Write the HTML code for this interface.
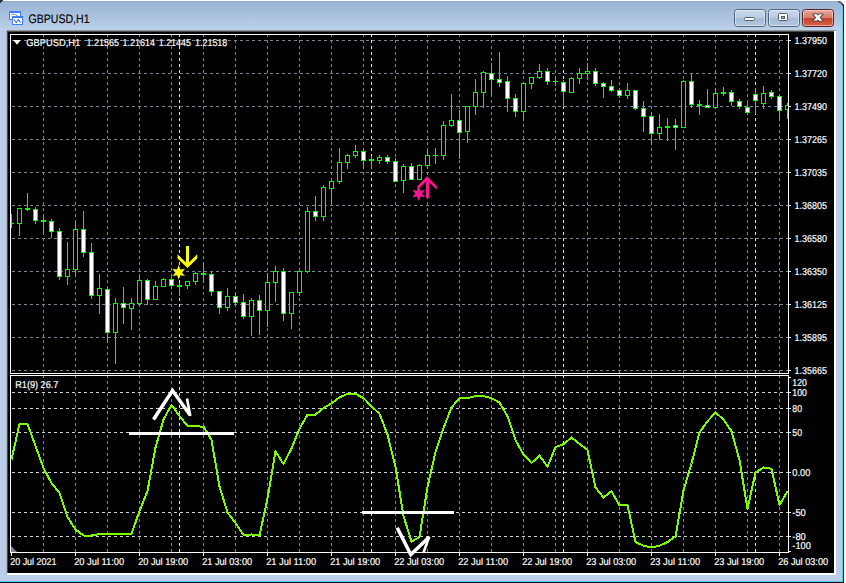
<!DOCTYPE html>
<html lang="en">
<head>
<meta charset="utf-8">
<title>GBPUSD,H1</title>
<style>
html,body{margin:0;padding:0;background:#ffffff;}
body{width:846px;height:583px;overflow:hidden;font-family:'Liberation Sans', Arial, sans-serif;}
svg text{white-space:pre;text-rendering:geometricPrecision;}
</style>
</head>
<body>
<svg width="846" height="583" viewBox="0 0 846 583" style="display:block">
<defs>
<linearGradient id="tb" x1="0" y1="0" x2="0" y2="1"><stop offset="0" stop-color="#98b3d3"/><stop offset="1" stop-color="#bcd1ea"/></linearGradient>
<linearGradient id="bt" x1="0" y1="0" x2="0" y2="1"><stop offset="0" stop-color="#c9d9ec"/><stop offset="0.48" stop-color="#bacce3"/><stop offset="0.5" stop-color="#a4bad6"/><stop offset="1" stop-color="#b4c8e0"/></linearGradient>
<linearGradient id="bc" x1="0" y1="0" x2="0" y2="1"><stop offset="0" stop-color="#e9a99b"/><stop offset="0.48" stop-color="#d8806d"/><stop offset="0.5" stop-color="#c4402a"/><stop offset="1" stop-color="#d4654a"/></linearGradient>
<clipPath id="cm"><rect x="11" y="35" width="777" height="338"/></clipPath>
<clipPath id="cs"><rect x="11" y="376" width="777" height="176"/></clipPath>
</defs>
<rect x="0" y="0" width="846" height="583" fill="#ffffff"/>
<rect x="0" y="1" width="843" height="581" fill="#bacee7"/>
<rect x="0" y="1" width="843" height="29" fill="url(#tb)"/>
<rect x="0" y="1" width="843" height="1" fill="#8ea9ca"/>
<rect x="842" y="6" width="1" height="576" fill="#4fd0ee"/>
<rect x="0" y="581" width="843" height="1" fill="#4fd0ee"/>
<rect x="843" y="4" width="1" height="579" fill="#111111"/>
<rect x="0" y="582" width="844" height="1" fill="#111111"/>
<path d="M0 0h3v1h-1v1h-1v1h-1z" fill="#333"/>
<path d="M838 1h2l1 1 1 1 1 1v2h-1v-1l-1-1-1-1-2-1z" fill="#555"/>
<path d="M840 0h6v8h-2v-3l-1-2-1-1-2-1z" fill="#ffffff"/>
<rect x="6" y="30" width="830" height="1" fill="#90959c"/>
<rect x="6" y="30" width="1" height="545" fill="#aab4c2"/>
<rect x="7" y="31" width="829" height="544" fill="#ffffff"/>
<rect x="7" y="31" width="827" height="1" fill="#4b4b4b"/>
<rect x="7" y="31" width="1" height="542" fill="#4b4b4b"/>
<rect x="8" y="32" width="826" height="541" fill="#000000"/>
<g shape-rendering="crispEdges">
<rect x="9.5" y="11.5" width="11" height="8" fill="#ffffff" stroke="#3f7dff" stroke-width="1"/>
<rect x="9" y="11" width="12" height="2" fill="#3f7dff"/>
<rect x="12.5" y="16.5" width="10" height="8" fill="#ffffff" stroke="#3f7dff" stroke-width="1"/>
<rect x="12" y="16" width="11" height="2" fill="#3f7dff"/>
</g>
<path d="M11.3 15.2l1.4-1.4 1.2 1.2M15 13.8l1.4 1.6 1.2-0.2" fill="none" stroke="#3f7dff" stroke-width="1"/>
<path d="M14.2 19.6L16.3 22.6L18.4 19.6L20.6 22.6" fill="none" stroke="#3f7dff" stroke-width="1.1"/>
<text x="28.5" y="22.6" font-family="'Liberation Sans', Arial, sans-serif" font-size="12.4" fill="#000000" stroke="#000000" stroke-width="0.15" textLength="61" lengthAdjust="spacingAndGlyphs">GBPUSD,H1</text>
<rect x="734.5" y="9.5" width="31" height="17" rx="3" ry="3" fill="url(#bt)" stroke="#52637e" stroke-width="1"/>
<rect x="735.5" y="10.5" width="29" height="15" rx="2" ry="2" fill="none" stroke="#ffffff" stroke-opacity="0.45" stroke-width="1"/>
<rect x="768.5" y="9.5" width="31" height="17" rx="3" ry="3" fill="url(#bt)" stroke="#52637e" stroke-width="1"/>
<rect x="769.5" y="10.5" width="29" height="15" rx="2" ry="2" fill="none" stroke="#ffffff" stroke-opacity="0.45" stroke-width="1"/>
<rect x="802.5" y="9.5" width="31" height="17" rx="3" ry="3" fill="url(#bc)" stroke="#5b1d1d" stroke-width="1"/>
<rect x="803.5" y="10.5" width="29" height="15" rx="2" ry="2" fill="none" stroke="#ffffff" stroke-opacity="0.45" stroke-width="1"/>
<rect x="744.5" y="17.5" width="10" height="3" rx="1" fill="#ffffff" stroke="#535c6b" stroke-width="1"/>
<rect x="778.5" y="13.5" width="9" height="7" rx="1" fill="#ffffff" stroke="#535c6b" stroke-width="1"/>
<rect x="781.5" y="16.5" width="3" height="2" fill="#9fb4d2" stroke="#535c6b" stroke-width="1"/>
<path d="M813.3 14.3H816.7L822.5 20.7H819.1Z" fill="#4a3434" stroke="#4a3434" stroke-width="1.8" stroke-linejoin="round"/>
<path d="M822.5 14.3H819.1L813.3 20.7H816.7Z" fill="#4a3434" stroke="#4a3434" stroke-width="1.8" stroke-linejoin="round"/>
<path d="M813.3 14.3H816.7L822.5 20.7H819.1Z" fill="#ffffff"/>
<path d="M822.5 14.3H819.1L813.3 20.7H816.7Z" fill="#ffffff"/>
<g shape-rendering="crispEdges" fill="none" stroke-width="1" stroke-dasharray="3 3">
<path d="M43.5 34V373M75.5 34V373M107.5 34V373M139.5 34V373M171.5 34V373M203.5 34V373M235.5 34V373M267.5 34V373M299.5 34V373M331.5 34V373M363.5 34V373M395.5 34V373M427.5 34V373M459.5 34V373M491.5 34V373M523.5 34V373M555.5 34V373M587.5 34V373M619.5 34V373M651.5 34V373M683.5 34V373M715.5 34V373M747.5 34V373M779.5 34V373" stroke="#778899"/>
<path d="M43.5 375V552M75.5 375V552M107.5 375V552M139.5 375V552M171.5 375V552M203.5 375V552M235.5 375V552M267.5 375V552M299.5 375V552M331.5 375V552M363.5 375V552M395.5 375V552M427.5 375V552M459.5 375V552M491.5 375V552M523.5 375V552M555.5 375V552M587.5 375V552M619.5 375V552M651.5 375V552M683.5 375V552M715.5 375V552M747.5 375V552M779.5 375V552" stroke="#778899"/>
<path d="M179.5 34V373M371.5 34V373M563.5 34V373M755.5 34V373" stroke="#e6e6e6"/>
<path d="M179.5 375V552M371.5 375V552M563.5 375V552M755.5 375V552" stroke="#e6e6e6"/>
<path d="M12 40.5H788M12 73.5H788M12 106.5H788M12 139.5H788M12 172.5H788M12 205.5H788M12 238.5H788M12 271.5H788M12 304.5H788M12 337.5H788M12 370.5H788" stroke="#778899"/>
<path d="M12 392.5H788M12 408.5H788M12 432.5H788M12 472.5H788M12 512.5H788M12 536.5H788" stroke="#d2d2d2"/>
</g>
<g shape-rendering="crispEdges" clip-path="url(#cm)">
<path d="M19.5 208V236M27.5 193V211M35.5 207V224M43.5 217V235M51.5 219V238M59.5 228V280M67.5 242V285M75.5 223V276M83.5 211V257M91.5 243V299M99.5 274V314M107.5 287V343M115.5 298V364M123.5 287V324M131.5 298V330M139.5 277V306M147.5 279V305M155.5 281V300M163.5 278V287M171.5 274V289M179.5 283V296M187.5 281V289M195.5 272V285M203.5 262V282M211.5 272V296M219.5 291V314M227.5 288V311M235.5 293V306M243.5 294V319M251.5 298V336M259.5 295V335M267.5 273V327M275.5 266V302M283.5 268V321M291.5 292V329M299.5 271V296M307.5 207V273M315.5 196V221M323.5 185V221M331.5 178V204M339.5 148V184M347.5 154V169M355.5 145V158M363.5 149V169M371.5 156V169M379.5 155V164M387.5 155V164M395.5 158V182M403.5 164V193M411.5 163V180M419.5 164V180M427.5 150V169M435.5 148V164M433 155.5H438M443.5 121V160M451.5 94V127M459.5 110V159M467.5 106V143M475.5 79V115M483.5 71V108M491.5 63V96M499.5 52V87M507.5 76V112M515.5 94V117M523.5 82V121M531.5 77V89M539.5 64V79M547.5 68V85M555.5 77V86M553 81.5H558M563.5 80V107M571.5 77V93M579.5 68V84M587.5 63V80M595.5 68V86M603.5 82V98M611.5 80V92M619.5 89V98M627.5 83V99M635.5 90V110M643.5 101V132M651.5 113V145M659.5 114V140M667.5 118V141M675.5 119V150M683.5 80V128M691.5 73V108M699.5 100V115M707.5 89V108M715.5 88V109M723.5 87V96M731.5 90V106M739.5 99V109M747.5 103V113M755.5 88V114M763.5 86V109M771.5 90V99M779.5 94V121M787.5 103V119M11.5 214V228M11 223.5H14" stroke="#00ff00" stroke-width="1" fill="none"/>
<path d="M17.5 208.5H21.5V223.5H17.5ZM65.5 269.5H69.5V276.5H65.5ZM73.5 229.5H77.5V269.5H73.5ZM97.5 288.5H101.5V295.5H97.5ZM113.5 303.5H117.5V332.5H113.5ZM129.5 303.5H133.5V308.5H129.5ZM137.5 280.5H141.5V303.5H137.5ZM153.5 286.5H157.5V299.5H153.5ZM161.5 279.5H165.5V286.5H161.5ZM185.5 281.5H189.5V285.5H185.5ZM193.5 273.5H197.5V281.5H193.5ZM225.5 296.5H229.5V307.5H225.5ZM249.5 300.5H253.5V316.5H249.5ZM265.5 282.5H269.5V310.5H265.5ZM273.5 271.5H277.5V282.5H273.5ZM289.5 292.5H293.5V313.5H289.5ZM297.5 271.5H301.5V292.5H297.5ZM305.5 211.5H309.5V271.5H305.5ZM321.5 187.5H325.5V216.5H321.5ZM329.5 181.5H333.5V188.5H329.5ZM337.5 162.5H341.5V181.5H337.5ZM345.5 155.5H349.5V162.5H345.5ZM353.5 151.5H357.5V155.5H353.5ZM377.5 157.5H381.5V160.5H377.5ZM401.5 166.5H405.5V180.5H401.5ZM417.5 165.5H421.5V179.5H417.5ZM425.5 155.5H429.5V165.5H425.5ZM441.5 125.5H445.5V155.5H441.5ZM449.5 120.5H453.5V125.5H449.5ZM465.5 106.5H469.5V131.5H465.5ZM473.5 92.5H477.5V106.5H473.5ZM481.5 72.5H485.5V92.5H481.5ZM521.5 83.5H525.5V111.5H521.5ZM529.5 77.5H533.5V83.5H529.5ZM537.5 71.5H541.5V77.5H537.5ZM569.5 78.5H573.5V92.5H569.5ZM577.5 73.5H581.5V78.5H577.5ZM585.5 71.5H589.5V73.5H585.5ZM625.5 90.5H629.5V95.5H625.5ZM657.5 127.5H661.5V133.5H657.5ZM681.5 81.5H685.5V127.5H681.5ZM713.5 93.5H717.5V107.5H713.5ZM761.5 93.5H765.5V103.5H761.5ZM785.5 105.5H789.5V109.5H785.5Z" stroke="#00ff00" stroke-width="1" fill="#000000"/>
<path d="M25.5 208.5H29.5V209.5H25.5ZM33.5 209.5H37.5V220.5H33.5ZM41.5 220.5H45.5V221.5H41.5ZM49.5 221.5H53.5V231.5H49.5ZM57.5 231.5H61.5V276.5H57.5ZM81.5 229.5H85.5V252.5H81.5ZM89.5 252.5H93.5V295.5H89.5ZM105.5 289.5H109.5V332.5H105.5ZM121.5 303.5H125.5V307.5H121.5ZM145.5 280.5H149.5V299.5H145.5ZM169.5 279.5H173.5V285.5H169.5ZM177.5 285.5H181.5V286.5H177.5ZM201.5 273.5H205.5V274.5H201.5ZM209.5 274.5H213.5V291.5H209.5ZM217.5 291.5H221.5V307.5H217.5ZM233.5 296.5H237.5V302.5H233.5ZM241.5 302.5H245.5V316.5H241.5ZM257.5 300.5H261.5V310.5H257.5ZM281.5 271.5H285.5V313.5H281.5ZM313.5 211.5H317.5V216.5H313.5ZM361.5 151.5H365.5V160.5H361.5ZM369.5 159.5H373.5V160.5H369.5ZM385.5 157.5H389.5V161.5H385.5ZM393.5 161.5H397.5V181.5H393.5ZM409.5 166.5H413.5V179.5H409.5ZM457.5 120.5H461.5V132.5H457.5ZM489.5 73.5H493.5V79.5H489.5ZM497.5 79.5H501.5V82.5H497.5ZM505.5 81.5H509.5V98.5H505.5ZM513.5 98.5H517.5V111.5H513.5ZM545.5 71.5H549.5V81.5H545.5ZM561.5 82.5H565.5V91.5H561.5ZM593.5 71.5H597.5V83.5H593.5ZM601.5 83.5H605.5V86.5H601.5ZM609.5 86.5H613.5V90.5H609.5ZM617.5 90.5H621.5V95.5H617.5ZM633.5 90.5H637.5V108.5H633.5ZM641.5 108.5H645.5V116.5H641.5ZM649.5 116.5H653.5V133.5H649.5ZM665.5 126.5H669.5V127.5H665.5ZM673.5 125.5H677.5V127.5H673.5ZM689.5 81.5H693.5V104.5H689.5ZM697.5 104.5H701.5V105.5H697.5ZM705.5 105.5H709.5V107.5H705.5ZM721.5 92.5H725.5V93.5H721.5ZM729.5 92.5H733.5V101.5H729.5ZM737.5 101.5H741.5V106.5H737.5ZM745.5 107.5H749.5V112.5H745.5ZM753.5 94.5H757.5V100.5H753.5ZM769.5 92.5H773.5V96.5H769.5ZM777.5 96.5H781.5V110.5H777.5Z" stroke="#00ff00" stroke-width="1" fill="#ffffff"/>
</g>
<g shape-rendering="crispEdges" fill="none" stroke="#ffffff" stroke-width="1">
<path d="M10.5 34V374M10.5 375V553"/>
<path d="M10 34.5H789"/>
<path d="M788.5 34V374M788.5 375V553"/>
<path d="M10 373.5H789"/>
<path d="M10 375.5H789"/>
<path d="M10 552.5H789"/>
<path d="M789 40.5H791M789 73.5H791M789 106.5H791M789 139.5H791M789 172.5H791M789 205.5H791M789 238.5H791M789 271.5H791M789 304.5H791M789 337.5H791M789 370.5H791M789 377.5H791M789 392.5H791M789 408.5H791M789 432.5H791M789 472.5H791M789 512.5H791M789 536.5H791M789 551.5H791M11.5 553V556M75.5 553V556M139.5 553V556M203.5 553V556M267.5 553V556M331.5 553V556M395.5 553V556M459.5 553V556M523.5 553V556M587.5 553V556M651.5 553V556M715.5 553V556M779.5 553V556"/>
</g>
<path d="M11 546V552H17Z" fill="#778899"/>
<polyline clip-path="url(#cs)" points="11.5,459.5 19.5,424.0 27.5,424.0 35.5,446.0 43.5,468.0 51.5,483.0 59.5,493.0 67.5,517.0 75.5,529.5 83.5,535.5 91.5,535.5 99.5,534.0 107.5,533.8 115.5,533.8 123.5,533.8 131.5,533.8 139.5,511.0 147.5,491.0 155.5,447.5 163.5,419.5 171.5,405.0 179.5,416.0 187.5,426.0 195.5,426.3 203.5,426.7 211.5,440.0 219.5,486.5 227.5,512.5 235.5,523.0 243.5,535.0 251.5,534.5 259.5,535.5 267.5,498.5 275.5,451.5 283.5,464.0 291.5,448.5 299.5,428.8 307.5,414.5 315.5,414.5 323.5,408.2 331.5,403.2 339.5,397.5 347.5,393.8 355.5,393.8 363.5,398.0 371.5,406.2 379.5,413.8 387.5,434.5 395.5,467.0 403.5,516.0 411.5,541.5 419.5,537.0 427.5,487.0 435.5,452.0 443.5,428.0 451.5,407.5 459.5,398.0 467.5,398.0 475.5,396.2 483.5,396.2 491.5,398.2 499.5,402.5 507.5,416.2 515.5,440.0 523.5,454.5 531.5,463.0 539.5,455.5 547.5,466.8 555.5,447.0 563.5,444.2 571.5,437.5 579.5,443.8 587.5,450.0 595.5,487.5 603.5,497.5 611.5,491.2 619.5,505.5 627.5,505.0 635.5,542.0 643.5,545.8 651.5,547.5 659.5,545.8 667.5,542.0 675.5,536.5 683.5,490.5 691.5,463.5 699.5,432.5 707.5,421.2 715.5,412.5 723.5,419.5 731.5,431.2 739.5,460.0 747.5,508.8 755.5,472.5 763.5,467.5 771.5,468.8 779.5,505.0 787.5,491.2" fill="none" stroke="#7cfc00" stroke-width="2" stroke-linejoin="round" shape-rendering="crispEdges"/>
<g shape-rendering="crispEdges"><rect x="129" y="432" width="105" height="3" fill="#ffffff"/><rect x="362" y="511" width="92" height="3" fill="#ffffff"/></g>
<g fill="none" stroke="#ffffff" stroke-width="3.5" stroke-linejoin="miter" stroke-linecap="butt">
<path d="M153.5 419.5L172.5 390.5L190 415"/>
<path d="M190.3 416L187 398.5" stroke-width="2.6"/>
<path d="M397.2 527.8L410.8 554.5L429 537.2"/>
<path d="M429.3 536.5L423.5 552.5" stroke-width="2.6"/>
</g>
<rect x="186" y="246" width="3" height="19" fill="#ffff00" shape-rendering="crispEdges"/>
<path d="M177.5 254.2L187.5 263.9L197.2 254.2V258.4L187.5 268L177.5 258.4Z" fill="#ffff00"/>
<polygon points="178.70,265.10 180.35,269.54 185.02,268.75 182.00,272.40 185.02,276.05 180.35,275.26 178.70,279.70 177.05,275.26 172.38,276.05 175.40,272.40 172.38,268.75 177.05,269.54" fill="#ffff00"/>
<rect x="426" y="180" width="3" height="18" fill="#ff1493" shape-rendering="crispEdges"/>
<path d="M427.2 176.3L436.7 186V189.8L427.2 180.3L417.4 190V186.2Z" fill="#ff1493"/>
<polygon points="418.70,186.30 420.35,190.74 425.02,189.95 422.00,193.60 425.02,197.25 420.35,196.46 418.70,200.90 417.05,196.46 412.38,197.25 415.40,193.60 412.38,189.95 417.05,190.74" fill="#ff1493"/>
<path d="M13.2 40H20.8L17 44.8Z" fill="#ffffff"/>
<text x="26.2" y="45.7" font-family="'Liberation Sans', Arial, sans-serif" font-size="10" fill="#ffffff" stroke="#ffffff" stroke-width="0.2" textLength="54" lengthAdjust="spacingAndGlyphs">GBPUSD,H1</text>
<text x="86.6" y="45.7" font-family="'Liberation Sans', Arial, sans-serif" font-size="10" fill="#ffffff" stroke="#ffffff" stroke-width="0.2" textLength="32.3" lengthAdjust="spacingAndGlyphs">1.21565</text>
<text x="122.6" y="45.7" font-family="'Liberation Sans', Arial, sans-serif" font-size="10" fill="#ffffff" stroke="#ffffff" stroke-width="0.2" textLength="32.3" lengthAdjust="spacingAndGlyphs">1.21614</text>
<text x="158.7" y="45.7" font-family="'Liberation Sans', Arial, sans-serif" font-size="10" fill="#ffffff" stroke="#ffffff" stroke-width="0.2" textLength="32.3" lengthAdjust="spacingAndGlyphs">1.21445</text>
<text x="195" y="45.7" font-family="'Liberation Sans', Arial, sans-serif" font-size="10" fill="#ffffff" stroke="#ffffff" stroke-width="0.2" textLength="32.3" lengthAdjust="spacingAndGlyphs">1.21518</text>
<text x="15.3" y="387.8" font-family="'Liberation Sans', Arial, sans-serif" font-size="10" fill="#ffffff" stroke="#ffffff" stroke-width="0.2" textLength="43" lengthAdjust="spacingAndGlyphs">R1(9) 26.7</text>
<text x="794.6" y="43.9" font-family="'Liberation Sans', Arial, sans-serif" font-size="10" fill="#ffffff" stroke="#ffffff" stroke-width="0.2" textLength="32.3" lengthAdjust="spacingAndGlyphs">1.37950</text>
<text x="794.6" y="76.9" font-family="'Liberation Sans', Arial, sans-serif" font-size="10" fill="#ffffff" stroke="#ffffff" stroke-width="0.2" textLength="32.3" lengthAdjust="spacingAndGlyphs">1.37720</text>
<text x="794.6" y="109.9" font-family="'Liberation Sans', Arial, sans-serif" font-size="10" fill="#ffffff" stroke="#ffffff" stroke-width="0.2" textLength="32.3" lengthAdjust="spacingAndGlyphs">1.37490</text>
<text x="794.6" y="142.9" font-family="'Liberation Sans', Arial, sans-serif" font-size="10" fill="#ffffff" stroke="#ffffff" stroke-width="0.2" textLength="32.3" lengthAdjust="spacingAndGlyphs">1.37265</text>
<text x="794.6" y="175.9" font-family="'Liberation Sans', Arial, sans-serif" font-size="10" fill="#ffffff" stroke="#ffffff" stroke-width="0.2" textLength="32.3" lengthAdjust="spacingAndGlyphs">1.37035</text>
<text x="794.6" y="208.9" font-family="'Liberation Sans', Arial, sans-serif" font-size="10" fill="#ffffff" stroke="#ffffff" stroke-width="0.2" textLength="32.3" lengthAdjust="spacingAndGlyphs">1.36805</text>
<text x="794.6" y="241.9" font-family="'Liberation Sans', Arial, sans-serif" font-size="10" fill="#ffffff" stroke="#ffffff" stroke-width="0.2" textLength="32.3" lengthAdjust="spacingAndGlyphs">1.36580</text>
<text x="794.6" y="274.9" font-family="'Liberation Sans', Arial, sans-serif" font-size="10" fill="#ffffff" stroke="#ffffff" stroke-width="0.2" textLength="32.3" lengthAdjust="spacingAndGlyphs">1.36350</text>
<text x="794.6" y="307.9" font-family="'Liberation Sans', Arial, sans-serif" font-size="10" fill="#ffffff" stroke="#ffffff" stroke-width="0.2" textLength="32.3" lengthAdjust="spacingAndGlyphs">1.36125</text>
<text x="794.6" y="340.9" font-family="'Liberation Sans', Arial, sans-serif" font-size="10" fill="#ffffff" stroke="#ffffff" stroke-width="0.2" textLength="32.3" lengthAdjust="spacingAndGlyphs">1.35895</text>
<text x="794.6" y="373.9" font-family="'Liberation Sans', Arial, sans-serif" font-size="10" fill="#ffffff" stroke="#ffffff" stroke-width="0.2" textLength="32.3" lengthAdjust="spacingAndGlyphs">1.35665</text>
<text x="792.3" y="385.79999999999995" font-family="'Liberation Sans', Arial, sans-serif" font-size="10" fill="#ffffff" stroke="#ffffff" stroke-width="0.2" textLength="14.5" lengthAdjust="spacingAndGlyphs">120</text>
<text x="792.3" y="395.9" font-family="'Liberation Sans', Arial, sans-serif" font-size="10" fill="#ffffff" stroke="#ffffff" stroke-width="0.2" textLength="14.5" lengthAdjust="spacingAndGlyphs">100</text>
<text x="792.3" y="411.9" font-family="'Liberation Sans', Arial, sans-serif" font-size="10" fill="#ffffff" stroke="#ffffff" stroke-width="0.2" textLength="9.8" lengthAdjust="spacingAndGlyphs">80</text>
<text x="792.3" y="435.9" font-family="'Liberation Sans', Arial, sans-serif" font-size="10" fill="#ffffff" stroke="#ffffff" stroke-width="0.2" textLength="9.8" lengthAdjust="spacingAndGlyphs">50</text>
<text x="792.3" y="475.9" font-family="'Liberation Sans', Arial, sans-serif" font-size="10" fill="#ffffff" stroke="#ffffff" stroke-width="0.2" textLength="18" lengthAdjust="spacingAndGlyphs">0.00</text>
<text x="792.3" y="516.4" font-family="'Liberation Sans', Arial, sans-serif" font-size="10" fill="#ffffff" stroke="#ffffff" stroke-width="0.2" textLength="13.5" lengthAdjust="spacingAndGlyphs">-50</text>
<text x="792.3" y="540.3" font-family="'Liberation Sans', Arial, sans-serif" font-size="10" fill="#ffffff" stroke="#ffffff" stroke-width="0.2" textLength="13.5" lengthAdjust="spacingAndGlyphs">-80</text>
<text x="792.3" y="549.1" font-family="'Liberation Sans', Arial, sans-serif" font-size="10" fill="#ffffff" stroke="#ffffff" stroke-width="0.2" textLength="18.5" lengthAdjust="spacingAndGlyphs">-100</text>
<text x="10.2" y="564.9" font-family="'Liberation Sans', Arial, sans-serif" font-size="10" fill="#ffffff" stroke="#ffffff" stroke-width="0.2" textLength="46.3" lengthAdjust="spacingAndGlyphs">20 Jul 2021</text>
<text x="74.2" y="564.9" font-family="'Liberation Sans', Arial, sans-serif" font-size="10" fill="#ffffff" stroke="#ffffff" stroke-width="0.2" textLength="49.9" lengthAdjust="spacingAndGlyphs">20 Jul 11:00</text>
<text x="138.2" y="564.9" font-family="'Liberation Sans', Arial, sans-serif" font-size="10" fill="#ffffff" stroke="#ffffff" stroke-width="0.2" textLength="49.9" lengthAdjust="spacingAndGlyphs">20 Jul 19:00</text>
<text x="202.2" y="564.9" font-family="'Liberation Sans', Arial, sans-serif" font-size="10" fill="#ffffff" stroke="#ffffff" stroke-width="0.2" textLength="49.9" lengthAdjust="spacingAndGlyphs">21 Jul 03:00</text>
<text x="266.2" y="564.9" font-family="'Liberation Sans', Arial, sans-serif" font-size="10" fill="#ffffff" stroke="#ffffff" stroke-width="0.2" textLength="49.9" lengthAdjust="spacingAndGlyphs">21 Jul 11:00</text>
<text x="330.2" y="564.9" font-family="'Liberation Sans', Arial, sans-serif" font-size="10" fill="#ffffff" stroke="#ffffff" stroke-width="0.2" textLength="49.9" lengthAdjust="spacingAndGlyphs">21 Jul 19:00</text>
<text x="394.2" y="564.9" font-family="'Liberation Sans', Arial, sans-serif" font-size="10" fill="#ffffff" stroke="#ffffff" stroke-width="0.2" textLength="49.9" lengthAdjust="spacingAndGlyphs">22 Jul 03:00</text>
<text x="458.2" y="564.9" font-family="'Liberation Sans', Arial, sans-serif" font-size="10" fill="#ffffff" stroke="#ffffff" stroke-width="0.2" textLength="49.9" lengthAdjust="spacingAndGlyphs">22 Jul 11:00</text>
<text x="522.2" y="564.9" font-family="'Liberation Sans', Arial, sans-serif" font-size="10" fill="#ffffff" stroke="#ffffff" stroke-width="0.2" textLength="49.9" lengthAdjust="spacingAndGlyphs">22 Jul 19:00</text>
<text x="586.2" y="564.9" font-family="'Liberation Sans', Arial, sans-serif" font-size="10" fill="#ffffff" stroke="#ffffff" stroke-width="0.2" textLength="49.9" lengthAdjust="spacingAndGlyphs">23 Jul 03:00</text>
<text x="650.2" y="564.9" font-family="'Liberation Sans', Arial, sans-serif" font-size="10" fill="#ffffff" stroke="#ffffff" stroke-width="0.2" textLength="49.9" lengthAdjust="spacingAndGlyphs">23 Jul 11:00</text>
<text x="714.2" y="564.9" font-family="'Liberation Sans', Arial, sans-serif" font-size="10" fill="#ffffff" stroke="#ffffff" stroke-width="0.2" textLength="49.9" lengthAdjust="spacingAndGlyphs">23 Jul 19:00</text>
<text x="778.2" y="564.9" font-family="'Liberation Sans', Arial, sans-serif" font-size="10" fill="#ffffff" stroke="#ffffff" stroke-width="0.2" textLength="49.9" lengthAdjust="spacingAndGlyphs">26 Jul 03:00</text>
</svg>
</body>
</html>
